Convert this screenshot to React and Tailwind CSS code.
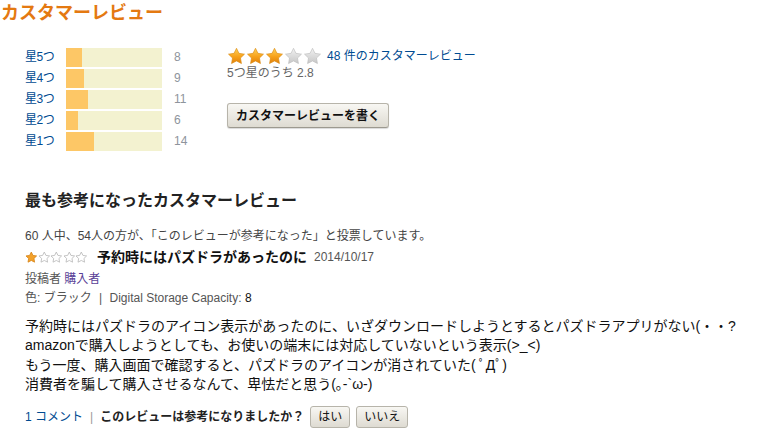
import React from "react";

const STAR = "M12 1.6l3.1 6.4 7 1-5.05 4.9 1.2 7L12 17.6l-6.25 3.3 1.2-7L1.9 9l7-1z";

const ratings = [
  { label: "星5つ", count: 8 },
  { label: "星4つ", count: 9 },
  { label: "星3つ", count: 11 },
  { label: "星2つ", count: 6 },
  { label: "星1つ", count: 14 },
];

function BigStar({ filled }) {
  const id = filled ? "gold" : "grey";
  return (
    <svg viewBox="0 0 24 24" className="w-[19px] h-[19px]">
      <defs>
        <linearGradient id={id} x1="0" y1="0" x2="0" y2="1">
          {filled ? (
            <>
              <stop offset="0" stopColor="#ffd25a" />
              <stop offset="0.55" stopColor="#f7a11a" />
              <stop offset="1" stopColor="#e0800c" />
            </>
          ) : (
            <>
              <stop offset="0" stopColor="#f2f2f2" />
              <stop offset="1" stopColor="#c6c6c6" />
            </>
          )}
        </linearGradient>
      </defs>
      <path d={STAR} fill={`url(#${id})`} stroke={filled ? "#d98a12" : "#bdbdbd"} strokeWidth="0.8" strokeLinejoin="round" />
    </svg>
  );
}

function SmallStar({ filled }) {
  return (
    <svg viewBox="0 0 24 24" className="w-[12.6px] h-[13px]">
      <path
        d={STAR}
        fill={filled ? "#f3a12a" : "none"}
        stroke={filled ? "#d8861a" : "#b9b9b9"}
        strokeWidth="1.6"
        strokeLinejoin="round"
      />
    </svg>
  );
}

export default function App() {
  const total = 48;
  return (
    <div className="w-[777px] h-[439px] overflow-hidden bg-white font-['Liberation_Sans','Noto_Sans_CJK_JP',sans-serif] text-[#111]">
      <h2 className="text-[18px] leading-[26px] font-bold text-[#e47911] pl-[1px]">カスタマーレビュー</h2>

      <div className="flex mt-[22px] pl-[25px]">
        <div className="flex flex-col gap-[2px] w-[202px]">
          {ratings.map((r) => (
            <div key={r.label} className="flex items-center h-[19px] text-[12px] leading-[19px]">
              <span className="w-[41px] text-[#004b91] tracking-[-0.5px]">{r.label}</span>
              <div className="w-[96px] h-[19px] bg-[#f3f2d0] flex">
                <div className="h-full bg-[#fdc766]" style={{ width: Math.round((r.count / total) * 96) }} />
              </div>
              <span className="ml-[12px] text-[#8e949c]">{r.count}</span>
            </div>
          ))}
        </div>

        <div className="flex flex-col">
          <div className="flex items-center h-[18px] -mt-[1px]">
            <div className="flex">
              <BigStar filled />
              <BigStar filled />
              <BigStar filled />
              <BigStar />
              <BigStar />
            </div>
            <span className="ml-[5px] text-[12px] text-[#004b91] leading-[18px]">48 件のカスタマーレビュー</span>
          </div>
          <div className="text-[12px] leading-[16px] text-[#666]">5つ星のうち 2.8</div>
          <button className="mt-[22px] self-start h-[25px] px-[8px] text-[12px] font-bold text-[#111] rounded-[3px] border border-[#b7b4aa] border-b-[#9c998f] bg-gradient-to-b from-[#f8f7f3] to-[#dedbd2] shadow-[0_1px_1px_rgba(0,0,0,0.15)]">
            カスタマーレビューを書く
          </button>
        </div>
      </div>

      <div className="pl-[25px]">
        <h3 className="mt-[40px] text-[16px] leading-[20px] font-bold text-[#222]">最も参考になったカスタマーレビュー</h3>

        <div className="mt-[17px] text-[12px] leading-[16px] text-[#444]">
          60 人中、54人の方が、「このレビューが参考になった」と投票しています。
        </div>

        <div className="mt-[3px] flex items-center h-[20px]">
          <div className="flex">
            <SmallStar filled />
            <SmallStar />
            <SmallStar />
            <SmallStar />
            <SmallStar />
          </div>
          <span className="ml-[9px] text-[14px] font-bold text-[#111]">予約時にはパズドラがあったのに</span>
          <span className="ml-[7px] text-[12px] text-[#555]">2014/10/17</span>
        </div>

        <div className="mt-[4px] text-[12px] leading-[16px] text-[#555]">
          投稿者 <span className="text-[#5a3f97]">購入者</span>
        </div>

        <div className="mt-[3px] text-[12px] leading-[16px] text-[#555]">
          色: ブラック <span className="mx-[4px]">|</span> Digital Storage Capacity: <span className="text-[#111]">8</span>
        </div>

        <div className="mt-[11px] text-[14px] leading-[19.4px] text-[#111]">
          <p>予約時にはパズドラのアイコン表示があったのに、いざダウンロードしようとするとパズドラアプリがない(・・?</p>
          <p>amazonで購入しようとしても、お使いの端末には対応していないという表示(&gt;_&lt;)</p>
          <p>もう一度、購入画面で確認すると、パズドラのアイコンが消されていた( ﾟДﾟ)</p>
          <p>消費者を騙して購入させるなんて、卑怯だと思う(｡-`ω-)</p>
        </div>

        <div className="mt-[11px] flex items-center h-[22px] text-[12px]">
          <span className="text-[#004b91]">1 コメント</span>
          <span className="mx-[7px] text-[#999]">|</span>
          <span className="font-bold text-[#222]">このレビューは参考になりましたか？</span>
          <button className="ml-[6px] h-[22px] px-[7px] rounded-[3px] border border-[#b7b4aa] bg-gradient-to-b from-[#f8f7f3] to-[#dedbd2] text-[12px] text-[#111]">
            はい
          </button>
          <button className="ml-[6px] h-[22px] px-[7px] rounded-[3px] border border-[#b7b4aa] bg-gradient-to-b from-[#f8f7f3] to-[#dedbd2] text-[12px] text-[#111]">
            いいえ
          </button>
        </div>
      </div>
    </div>
  );
}
